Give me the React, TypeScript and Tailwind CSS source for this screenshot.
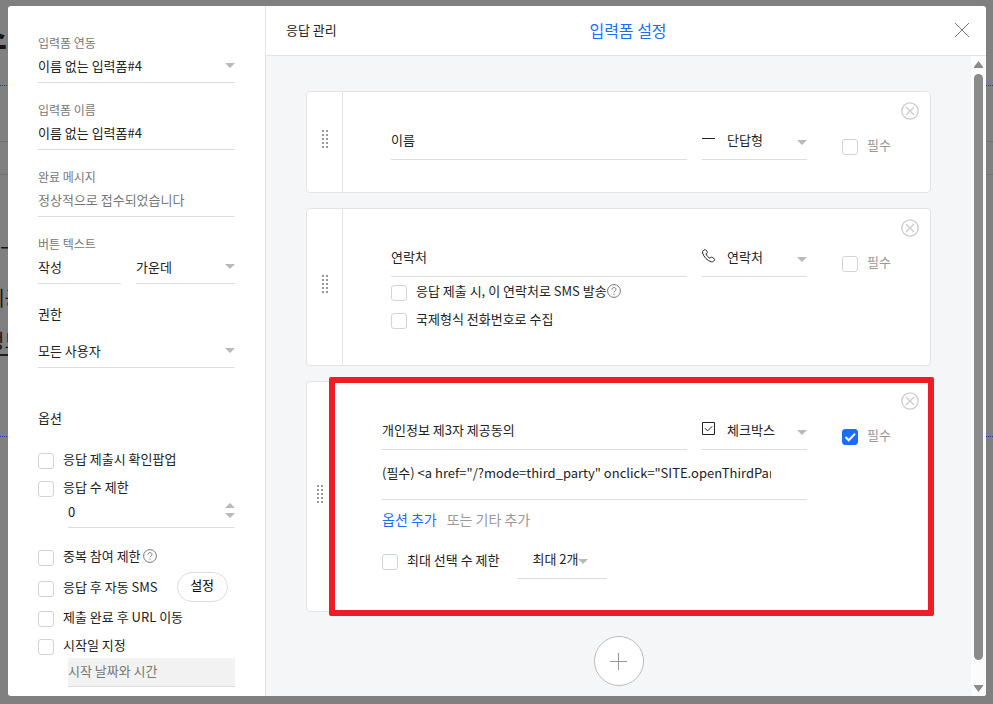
import { useState, type ReactNode } from "react";

type Option = {
  id: string;
  name: string;
};

const notifyOptions: Option[] = [
  { id: "sms", name: "응답 제출 시, 이 연락처로 SMS 발송" },
  { id: "intl", name: "국제형식 전화번호로 수집" },
];

const Caret = ({ className = "" }: { className?: string }) => (
  <svg
    viewBox="0 0 10 5"
    className={`pointer-events-none w-[10px] h-[5px] fill-[#b9b9b9] ${className}`}
  >
    <path d="M0 0h10L5 5z" />
  </svg>
);

const HelpIcon = () => (
  <svg viewBox="0 0 14 14" className="w-[14px] h-[14px]" fill="none" stroke="#777">
    <circle cx="7" cy="7" r="6.4" />
    <path d="M5 5.6C5 4.3 5.8 3.6 7 3.6s2 .7 2 1.8c0 1.4-2 1.5-2 3" />
    <path d="M7 9.6v1.2" />
  </svg>
);

const LineIcon = () => (
  <svg viewBox="0 0 14 14" className="w-[14px] h-[14px]" stroke="#222">
    <path d="M0 6.5h13" />
  </svg>
);

const PhoneIcon = () => (
  <svg viewBox="0 0 14 14" className="w-[14px] h-[14px]" fill="none" stroke="#222">
    <path
      strokeLinejoin="round"
      d="M1.3 1.6 2.5.8c.6-.4 1.200-.2 1.600.3l1 1.700c.4.600.2 1.200-.3 1.600l-.8.500c.5 1.700 2.300 3.600 4 4.300l.8-.7c.500-.4 1.100-.4 1.600-.1l1.800 1.300c.5.4.6 1 .2 1.500l-.8 1c-.6.7-1.400.9-2.300.6C5.300 11.700 1.700 7.900.6 4 .4 3.100.6 2.200 1.300 1.600z"
    />
  </svg>
);

const CheckSquareIcon = () => (
  <svg viewBox="0 0 14 14" className="w-[14px] h-[14px]" fill="none" stroke="#222">
    <path d="M.5.5h12v12H.5z" />
    <path d="M3 6.300 5.600 8.900 10.200 4.300" />
  </svg>
);

const Grip = () => (
  <svg viewBox="0 0 6 18" className="w-[6px] h-[18px] fill-[#999]">
    {[0, 4, 8, 12, 16].map((y) => (
      <path key={y} d={`M0 ${y}h2v2H0zM4 ${y}h2v2H4z`} />
    ))}
  </svg>
);

function CheckBox({
  label,
  muted,
  defaultChecked,
  className = "",
}: {
  label: string;
  muted?: boolean;
  defaultChecked?: boolean;
  className?: string;
}) {
  return (
    <label className={`flex items-center gap-[9px] whitespace-nowrap ${className}`}>
      <span className="relative flex shrink-0">
        <input
          type="checkbox"
          defaultChecked={defaultChecked}
          className="peer appearance-none w-4 h-4 rounded-[3px] border border-[#cfd5d8] bg-white checked:bg-[#1a6dff] checked:border-[#1a6dff]"
        />
        <svg
          viewBox="0 0 16 16"
          className="hidden peer-checked:block pointer-events-none absolute inset-0 w-4 h-4"
          fill="none"
          stroke="#fff"
          strokeWidth="2"
        >
          <path d="M3.500 8 6.700 11.200 13 4.700" />
        </svg>
      </span>
      <span className={`pb-1 ${muted ? "text-[#999]" : ""}`}>{label}</span>
    </label>
  );
}

function SelectBox({
  label,
  value,
  icon,
  className = "",
  selectClass = "pb-1",
  caretClass = "right-0",
}: {
  label: string;
  value: string;
  icon?: ReactNode;
  className?: string;
  selectClass?: string;
  caretClass?: string;
}) {
  return (
    <div className={`relative flex items-center h-[30px] border-b border-[#ddd] ${className}`}>
      {icon && <span className="pb-3">{icon}</span>}
      <select
        aria-label={label}
        className={`appearance-none w-full h-full bg-transparent outline-none ${selectClass}`}
      >
        <option>{value}</option>
      </select>
      <Caret className={`absolute top-[10px] ${caretClass}`} />
    </div>
  );
}

function Field({ label, children }: { label: string; children: ReactNode }) {
  return (
    <div>
      <p className="h-5 text-[12px] leading-5 text-[#777]">{label}</p>
      {children}
    </div>
  );
}

function QuestionCard({
  title,
  type,
  icon,
  required,
  narrow,
  children,
}: {
  title: string;
  type: string;
  icon: ReactNode;
  required?: boolean;
  narrow?: boolean;
  children: ReactNode;
}) {
  return (
    <section className="relative flex bg-white border border-[#e4e4e6] rounded-[4px]">
      <div
        className={`flex shrink-0 items-center justify-center pb-[6px] border-r border-[#e4e4e6] ${narrow ? "w-[27px]" : "w-9"}`}
      >
        <Grip />
      </div>
      <div className="flex-1 min-w-0 pl-12 pr-10 pt-[38px]">
        <div className="flex items-start">
          <input
            aria-label="질문"
            defaultValue={title}
            className="flex-1 min-w-0 h-[30px] pb-[10px] border-b border-[#ddd] outline-none"
          />
          <SelectBox
            label="질문 유형"
            value={type}
            icon={icon}
            className="w-[105px] ml-[15px]"
            selectClass="pl-[11px] pb-[10px]"
          />
          <CheckBox label="필수" muted defaultChecked={required} className="w-12 h-[34px] ml-[35px]" />
        </div>
        {children}
      </div>
      <button aria-label="삭제" className="absolute right-[11px] top-[10px]">
        <svg viewBox="0 0 18 18" className="w-[18px] h-[18px]" fill="none" stroke="#ccc">
          <circle cx="9" cy="9" r="8.200" strokeWidth="1.300" />
          <path strokeWidth="1.300" d="m5 5 8 8M13 5l-8 8" />
        </svg>
      </button>
    </section>
  );
}

// dimmed page that stays visible around the dialog
function Backdrop() {
  return (
    <div
      aria-hidden="true"
      className="absolute inset-0 overflow-hidden bg-[#808080] text-[#161616] whitespace-nowrap"
    >
      <div className="h-[52px] pt-[16px]">
        <p className="-ml-[26px] text-[36px] leading-[36px] font-bold">스</p>
      </div>
      <div className="h-[34px] border-b border-dotted border-[#173f8f]" />
      <div className="h-[56px] border-b border-[#727272]" />
      <div className="h-[33px] border-b border-[#727272]" />
      <div className="h-[181px] pt-[58px] border-b-2 border-[#1c1c1c] w-[300px]">
        <p className="text-[20px] leading-[30px]">ㅡ</p>
        <p className="-ml-[14px] pt-[20px] text-[20px] leading-[30px]">제공</p>
        <p className="-ml-[14px] pt-[13px] text-[20px] leading-[30px]">정보</p>
      </div>
      <div className="h-[81px] border-b border-dotted border-[#173f8f]" />
    </div>
  );
}

function Sidebar() {
  return (
    <aside className="shrink-0 w-[258px] px-[30px] pt-[27px] border-r border-[#e4e4e6] overflow-hidden">
      <div className="flex flex-col gap-[17px]">
        <Field label="입력폼 연동">
          <SelectBox label="입력폼 연동" value="이름 없는 입력폼#4" />
        </Field>
        <Field label="입력폼 이름">
          <input
            aria-label="입력폼 이름"
            defaultValue="이름 없는 입력폼#4"
            className="w-full h-[30px] pb-1 border-b border-[#ddd] outline-none"
          />
        </Field>
        <Field label="완료 메시지">
          <input
            aria-label="완료 메시지"
            placeholder="정상적으로 접수되었습니다"
            className="w-full h-[30px] pb-1 border-b border-[#ddd] outline-none placeholder:text-[#777]"
          />
        </Field>
        <Field label="버튼 텍스트">
          <div className="flex gap-[15px]">
            <input
              aria-label="버튼 텍스트"
              defaultValue="작성"
              className="w-[83px] h-[30px] pb-1 border-b border-[#ddd] outline-none"
            />
            <SelectBox label="버튼 정렬" value="가운데" className="flex-1" />
          </div>
        </Field>
      </div>

      <h2 className="mt-5 leading-5">권한</h2>
      <SelectBox label="권한" value="모든 사용자" className="mt-[14px]" />

      <h2 className="mt-10 leading-5">옵션</h2>
      <div className="mt-[19px]">
        <CheckBox label="응답 제출시 확인팝업" className="h-7" />
        <CheckBox label="응답 수 제한" className="h-7" />
        <div className="flex items-start h-[25px] ml-[30px] border-b border-[#ddd]">
          <input
            aria-label="응답 수"
            defaultValue="0"
            className="flex-1 min-w-0 h-[17px] outline-none"
          />
          <div className="flex flex-col gap-[5px]">
            <Caret className="rotate-180" />
            <Caret />
          </div>
        </div>
      </div>
      <div className="flex items-center mt-4">
        <CheckBox label="중복 참여 제한" className="h-7" />
        <span className="pb-[5px] pl-[2px]">
          <HelpIcon />
        </span>
      </div>
      <div className="flex items-start gap-[19px]">
        <CheckBox label="응답 후 자동 SMS" className="h-[33px]" />
        <button className="w-[51px] h-[30px] pb-1 border border-[#ddd] rounded-full text-black">
          설정
        </button>
      </div>
      <CheckBox label="제출 완료 후 URL 이동" className="h-7" />
      <CheckBox label="시작일 지정" className="mt-[3px] h-[22px]" />
      <div className="ml-[30px]">
        <input
          aria-label="시작 날짜와 시간"
          placeholder="시작 날짜와 시간"
          className="w-full h-[29px] pb-1 bg-[#f2f2f2] border-b border-[#ddd] outline-none placeholder:text-[#777]"
        />
      </div>
    </aside>
  );
}

function App() {
  const [option, setOption] = useState(
    '(필수) <a href="/?mode=third_party" onclick="SITE.openThirdParty(); return false;">',
  );

  return (
    <div className="relative h-screen pt-[6px] pb-2 pl-2 pr-[7px] font-['Noto_Sans_CJK_KR',sans-serif] text-[13px] text-[#222]">
      <Backdrop />
      <div className="relative flex h-full bg-white rounded-[3px] overflow-hidden">
        <Sidebar />

        <main className="flex-1 min-w-0 flex flex-col">
          <header className="shrink-0 grid grid-cols-[1fr_auto_1fr] items-center h-[50px] pb-[2px] pl-5 pr-4 border-b border-[#e4e4e6]">
            <a href="#responses" className="justify-self-start">
              응답 관리
            </a>
            <h1 className="text-[16px] text-[#1a6dff]">입력폼 설정</h1>
            <button aria-label="닫기" className="justify-self-end">
              <svg viewBox="0 0 16 16" className="w-4 h-4" fill="none" stroke="#777">
                <path d="m1 1 14 14M15 1 1 15" />
              </svg>
            </button>
          </header>

          <div className="flex-1 min-h-0 flex bg-[#f5f6f8]">
            <div className="flex-1 min-w-0 overflow-y-auto [scrollbar-width:none] px-10 pt-[35px] pb-[10px]">
              <div className="flex flex-col gap-[15px]">
                <QuestionCard title="이름" type="단답형" icon={<LineIcon />}>
                  <div className="h-7" />
                </QuestionCard>

                <QuestionCard title="연락처" type="연락처" icon={<PhoneIcon />}>
                  <div className="-mt-[2px] pb-[30px]">
                    {notifyOptions.map((item) => (
                      <div key={item.id} className="flex items-center">
                        <CheckBox label={item.name} className="h-7" />
                        {item.id === "sms" && (
                          <span className="pb-1">
                            <HelpIcon />
                          </span>
                        )}
                      </div>
                    ))}
                  </div>
                </QuestionCard>

                <div className="relative">
                  <QuestionCard
                    title="개인정보 제3자 제공동의"
                    type="체크박스"
                    icon={<CheckSquareIcon />}
                    required
                    narrow
                  >
                    <div className="-mt-1 mr-[83px] h-[50px] pr-9 border-b border-[#ddd]">
                      <input
                        aria-label="옵션"
                        value={option}
                        onChange={(e) => setOption(e.target.value)}
                        className="w-full h-[49px] pb-1 outline-none"
                      />
                    </div>
                    <div className="flex gap-[10px] mt-[9px] text-[14px] leading-5">
                      <button className="text-[#1a6dff]">옵션 추가</button>
                      <button className="text-[#999]">또는 기타 추가</button>
                    </div>
                    <div className="flex items-start gap-[18px] mt-5 pb-8">
                      <CheckBox label="최대 선택 수 제한" className="h-[26px]" />
                      <SelectBox
                        label="최대 선택 수"
                        value="최대 2개"
                        className="w-[90px] pl-[15px]"
                        selectClass="pb-[10px]"
                        caretClass="right-[19px]"
                      />
                    </div>
                  </QuestionCard>
                  <div className="pointer-events-none absolute left-[23px] -right-[3px] -top-1 -bottom-1 border-[6px] border-[#ee1c25] rounded-[2px]" />
                </div>
              </div>

              <button
                aria-label="질문 추가"
                className="flex items-center justify-center w-[50px] h-[50px] mx-auto mt-6 bg-white border border-[#bbb] rounded-full"
              >
                <svg viewBox="0 0 17 17" className="w-[17px] h-[17px]" stroke="#999">
                  <path d="M0 8.500h17M8.500 0v17" />
                </svg>
              </button>
            </div>

            <div
              aria-hidden="true"
              className="shrink-0 flex flex-col items-center w-[15px] pt-[5px] pb-1 bg-[#fcfcfc]"
            >
              <svg viewBox="0 0 9 7" className="w-[9px] h-[7px] fill-[#8b8b8b]">
                <path d="M4.500 0 9 6v1H0V6z" />
              </svg>
              <div className="flex-1 w-[9px] mt-[6px] mb-[25px] rounded-full bg-[#8b8b8b]" />
              <svg viewBox="0 0 9 7" className="w-[9px] h-[7px] fill-[#8b8b8b]">
                <path d="M4.500 7 9 1V0H0v1z" />
              </svg>
            </div>
          </div>
        </main>
      </div>
    </div>
  );
}

export default App;
